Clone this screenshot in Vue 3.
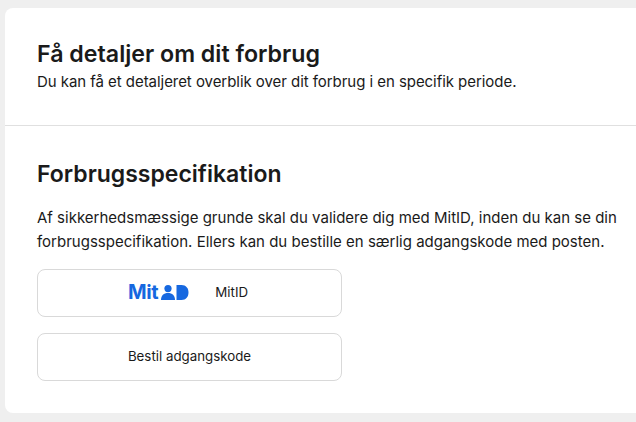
<template>
  <div class="page">
    <div class="card">
      <section class="intro">
        <h1 class="title">Få detaljer om dit forbrug</h1>
        <p class="lead">Du kan få et detaljeret overblik over dit forbrug i en specifik periode.</p>
      </section>
      <section class="spec">
        <h2 class="title">Forbrugsspecifikation</h2>
        <p class="body">
          Af sikkerhedsmæssige grunde skal du validere dig med MitID, inden du kan se din<br />
          forbrugsspecifikation. Ellers kan du bestille en særlig adgangskode med posten.
        </p>
        <div class="actions">
          <button class="btn mitid">
            <span class="logo">
              <span class="logoText">Mit</span>
              <svg class="logoMark" width="28" height="15" viewBox="0 0 28 15">
                <circle cx="7" cy="3.6" r="3.6" fill="#1668e0" />
                <path d="M0 15C0 10.5 2.8 8 7 8S14 10.5 14 15Z" fill="#1668e0" />
                <path d="M15.5 0H20.5C25 0 27.5 3.2 27.5 7.5S25 15 20.5 15H15.5Z" fill="#1668e0" />
              </svg>
            </span>
            <span class="btnLabel">MitID</span>
          </button>
          <button class="btn">Bestil adgangskode</button>
        </div>
      </section>
    </div>
  </div>
</template>

<script setup>
</script>

<style>
html, body {
  margin: 0;
  background: #efefef;
}
</style>

<style scoped>
.page {
  width: 636px;
  height: 422px;
  box-sizing: border-box;
  padding: 8px 0 9px 5px;
  overflow: hidden;
  background: #efefef;
  font-family: Inter, "Liberation Sans", sans-serif;
  color: #1a1a1a;
}
.card {
  width: 640px;
  height: 405px;
  background: #fff;
  border-radius: 8px;
}
.intro {
  height: 118px;
  box-sizing: border-box;
  padding: 33px 20px 0 32px;
  border-bottom: 1px solid #e0e0e0;
}
.spec {
  padding: 35px 20px 0 32px;
}
.title {
  margin: 0;
  font-size: 23.2px;
  line-height: 26px;
  font-weight: 600;
}
.spec .title {
  font-size: 23px;
}
.lead {
  margin: 4px 0 0;
  font-size: 15px;
  line-height: 22px;
  letter-spacing: -0.05px;
}
.body {
  margin: 19px 0 0;
  font-size: 15px;
  line-height: 24px;
}
.actions {
  display: flex;
  flex-direction: column;
  gap: 16px;
  width: 305px;
  margin-top: 15px;
}
.btn {
  display: flex;
  align-items: center;
  justify-content: center;
  box-sizing: border-box;
  height: 48px;
  padding: 0 0 2px;
  border: 1px solid #d9d9d9;
  border-radius: 8px;
  background: #fff;
  font: inherit;
  font-size: 13.3px;
  color: inherit;
}
.mitid {
  padding-right: 3px;
}
.logo {
  display: flex;
  align-items: center;
  gap: 3px;
  margin-right: 26px;
}
.logoText {
  font-size: 20px;
  line-height: 15px;
  font-weight: 700;
  letter-spacing: -0.3px;
  color: #1668e0;
}
.logoMark {
  display: block;
}
</style>
